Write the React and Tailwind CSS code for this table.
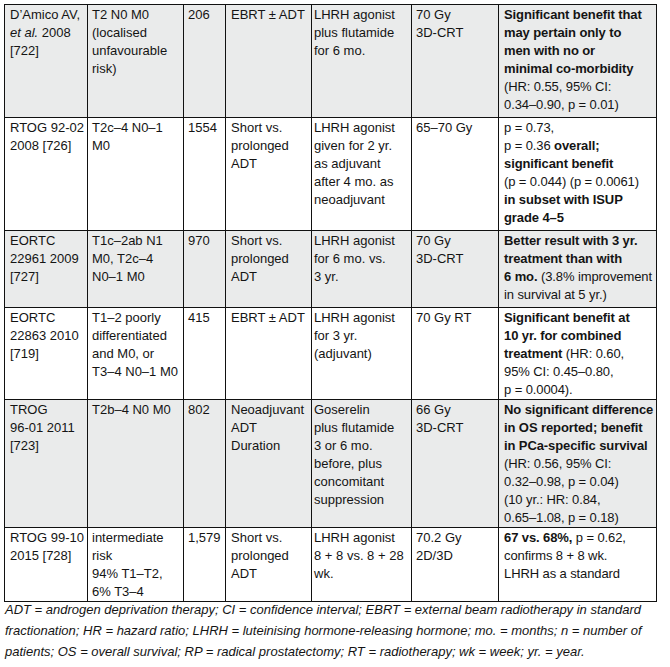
import React from 'react'

const B = ({ children }) => <span className="font-bold">{children}</span>

const rows = [
  {
    h: 'h-[113px]',
    gray: true,
    cells: [
      <>D’Amico AV,<br /><i>et al.</i> 2008<br />[722]</>,
      <>T2 N0 M0<br />(localised<br />unfavourable<br />risk)</>,
      <>206</>,
      <>EBRT ± ADT</>,
      <>LHRH agonist<br />plus flutamide<br />for 6 mo.</>,
      <>70 Gy<br />3D-CRT</>,
      <><B>Significant benefit that<br />may pertain only to<br />men with no or<br />minimal co-morbidity</B><br />(HR: 0.55, 95% CI:<br />0.34–0.90, p = 0.01)</>
    ]
  },
  {
    h: 'h-[113px]',
    gray: false,
    cells: [
      <>RTOG 92-02<br />2008 [726]</>,
      <>T2c–4 N0–1<br />M0</>,
      <>1554</>,
      <>Short vs.<br />prolonged<br />ADT</>,
      <>LHRH agonist<br />given for 2 yr.<br />as adjuvant<br />after 4 mo. as<br />neoadjuvant</>,
      <>65–70 Gy</>,
      <>p = 0.73,<br />p = 0.36 <B>overall;</B><br /><B>significant benefit</B><br />(p = 0.044) (p = 0.0061)<br /><B>in subset with ISUP<br />grade 4–5</B></>
    ]
  },
  {
    h: 'h-[77px]',
    gray: true,
    cells: [
      <>EORTC<br />22961 2009<br />[727]</>,
      <>T1c–2ab N1<br />M0, T2c–4<br />N0–1 M0</>,
      <>970</>,
      <>Short vs.<br />prolonged<br />ADT</>,
      <>LHRH agonist<br />for 6 mo. vs.<br />3 yr.</>,
      <>70 Gy<br />3D-CRT</>,
      <><B>Better result with 3 yr.<br />treatment than with<br />6 mo.</B> (3.8% improvement<br />in survival at 5 yr.)</>
    ]
  },
  {
    h: 'h-[90px]',
    gray: false,
    cells: [
      <>EORTC<br />22863 2010<br />[719]</>,
      <>T1–2 poorly<br />differentiated<br />and M0, or<br />T3–4 N0–1 M0</>,
      <>415</>,
      <>EBRT ± ADT</>,
      <>LHRH agonist<br />for 3 yr.<br />(adjuvant)</>,
      <>70 Gy RT</>,
      <><B>Significant benefit at<br />10 yr. for combined<br />treatment</B> (HR: 0.60,<br />95% CI: 0.45–0.80,<br />p = 0.0004).</>
    ]
  },
  {
    h: 'h-[127px]',
    gray: true,
    cells: [
      <>TROG<br />96-01 2011<br />[723]</>,
      <>T2b–4 N0 M0</>,
      <>802</>,
      <>Neoadjuvant<br />ADT<br />Duration</>,
      <>Goserelin<br />plus flutamide<br />3 or 6 mo.<br />before, plus<br />concomitant<br />suppression</>,
      <>66 Gy<br />3D-CRT</>,
      <><B>No significant difference<br />in OS reported; benefit<br />in PCa-specific survival</B><br />(HR: 0.56, 95% CI:<br />0.32–0.98, p = 0.04)<br />(10 yr.: HR: 0.84,<br />0.65–1.08, p = 0.18)</>
    ]
  },
  {
    h: 'h-[74px]',
    gray: false,
    cells: [
      <>RTOG 99-10<br />2015 [728]</>,
      <>intermediate<br />risk<br />94% T1–T2,<br />6% T3–4</>,
      <>1,579</>,
      <>Short vs.<br />prolonged<br />ADT</>,
      <>LHRH agonist<br />8 + 8 vs. 8 + 28<br />wk.</>,
      <>70.2 Gy<br />2D/3D</>,
      <><B>67 vs. 68%,</B> p = 0.62,<br />confirms 8 + 8 wk.<br />LHRH as a standard</>
    ]
  }
]

// per-column left padding, tuned to the scan
const pads = [
  'pl-[5px]',
  'pl-[4px]',
  'pl-[4px]',
  'pl-[5px]',
  'pl-[2px]',
  'pl-[4px]',
  'pl-[5px] tracking-[-0.1px]'
]

export default function App() {
  return (
    <div className="bg-white w-[670px] h-[667px] pt-[4px] pl-[4px] text-[#141414] font-['Liberation_Sans',Arial,sans-serif]">
      <table className="table-fixed border-collapse w-[652px] text-[13px] leading-[18px]">
        <colgroup>
          <col className="w-[83px]" />
          <col className="w-[96px]" />
          <col className="w-[42px]" />
          <col className="w-[86px]" />
          <col className="w-[100px]" />
          <col className="w-[87px]" />
          <col className="w-[158px]" />
        </colgroup>
        <tbody>
          {rows.map((row, i) => (
            <tr key={i} className={`${row.h} ${row.gray ? 'bg-[#eaebeb]' : 'bg-white'}`}>
              {row.cells.map((cell, j) => (
                <td
                  key={j}
                  className={`border border-[#111] align-top whitespace-nowrap pt-[1px] pr-[2px] ${pads[j]}`}
                >
                  {cell}
                </td>
              ))}
            </tr>
          ))}
        </tbody>
      </table>

      {/* Abbreviations */}
      <p className="italic text-[13px] leading-[21px] whitespace-nowrap pl-[1px] -mt-[3px]">
        ADT = androgen deprivation therapy; CI = confidence interval; EBRT = external beam radiotherapy in standard
        <br />
        fractionation; HR = hazard ratio; LHRH = luteinising hormone-releasing hormone; mo. = months; n = number of
        <br />
        patients; OS = overall survival; RP = radical prostatectomy; RT = radiotherapy; wk = week; yr. = year.
      </p>
    </div>
  )
}
